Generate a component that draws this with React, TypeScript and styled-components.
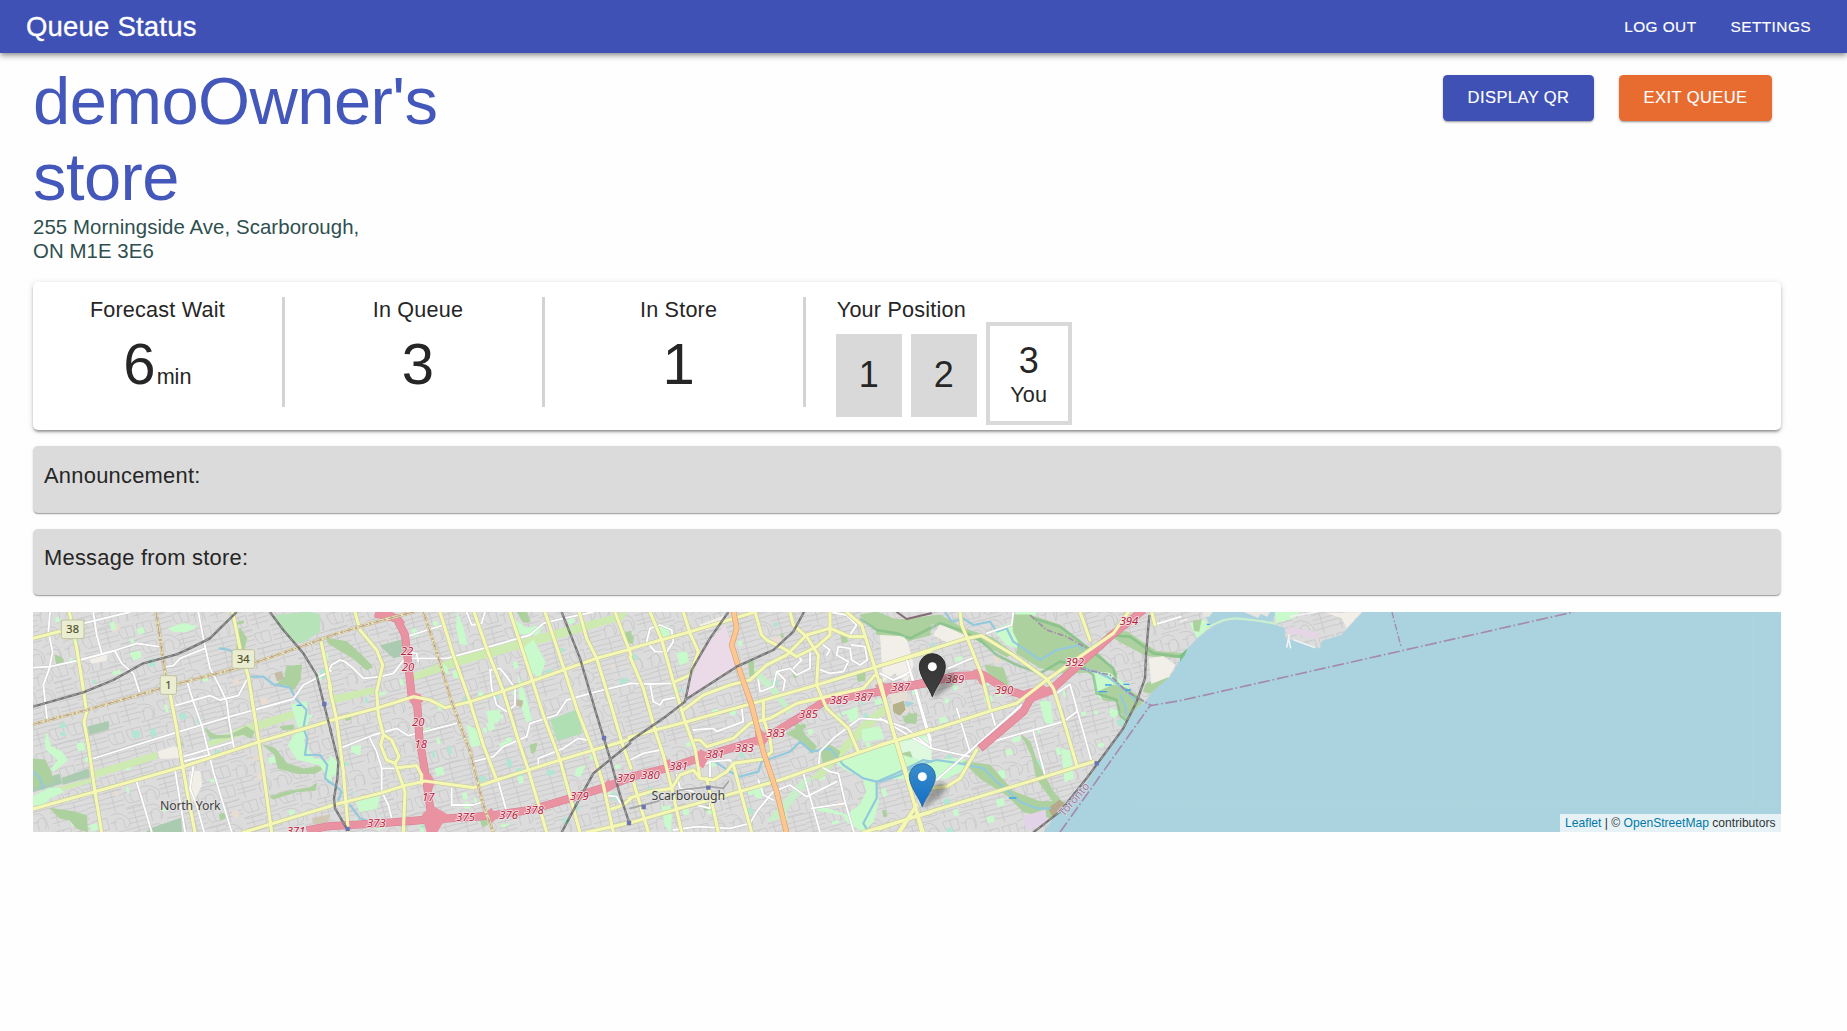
import React from "react";
import styled, { createGlobalStyle } from "styled-components";

const GlobalStyle = createGlobalStyle`
  *, *::before, *::after { box-sizing: border-box; }
  body {
    margin: 0;
    background: #fefefe;
    color: #262626;
    font-family: "Liberation Sans", Arial, Helvetica, sans-serif;
    overflow: hidden;
  }
`;

const AppBar = styled.header`
  position: relative;
  display: flex;
  align-items: center;
  justify-content: space-between;
  height: 53px;
  padding: 0 36px 0 26px;
  background: #3f51b5;
  color: #fff;
  box-shadow: 0 2px 4px -1px rgba(0, 0, 0, 0.3), 0 4px 5px rgba(0, 0, 0, 0.16), 0 1px 10px rgba(0, 0, 0, 0.12);
`;

const AppTitle = styled.div`
  font-size: 27.5px;
  letter-spacing: 0.0075em;
  -webkit-text-stroke: 0.3px currentColor;
`;

const Nav = styled.nav`
  display: flex;
  gap: 34px;
`;

const NavLink = styled.a`
  font-size: 15.4px;
  letter-spacing: 0.02857em;
  line-height: 17px;
  text-transform: uppercase;
  -webkit-text-stroke: 0.15px currentColor;
`;

const Page = styled.main`
  padding: 9.7px 66px 0 33px;
`;

const TopRow = styled.section`
  display: flex;
  justify-content: space-between;
  align-items: flex-start;
`;

const StoreInfo = styled.div`
  width: 437px;
`;

const StoreName = styled.h1`
  margin: 0;
  color: #4457bb;
  font-size: 66.9px;
  font-weight: 400;
  line-height: 76px;
  letter-spacing: -0.00833em;
`;

const Address = styled.p`
  margin: 0;
  color: #2f4f4f;
  font-size: 20.4px;
  line-height: 24.8px;
  letter-spacing: 0.0037em;
`;

const Actions = styled.div`
  display: flex;
  gap: 25px;
  padding: 12px 9px 0 0;
`;

const Button = styled.button<{ $color: string; $width: number }>`
  width: ${(p) => p.$width}px;
  height: 46px;
  padding: 0;
  border: 0;
  border-radius: 4.5px;
  background: ${(p) => p.$color};
  color: #fff;
  font: 16.5px "Liberation Sans", Arial, sans-serif;
  letter-spacing: 0.026em;
  text-transform: uppercase;
  white-space: nowrap;
  -webkit-text-stroke: 0.15px currentColor;
  box-shadow: 0 2px 2px -1px rgba(0, 0, 0, 0.28), 0 1px 3px rgba(0, 0, 0, 0.2);
`;

const StatsCard = styled.section`
  display: flex;
  height: 148px;
  margin-top: 17.7px;
  padding-top: 15px;
  border-radius: 5px;
  background: #fff;
  box-shadow: 0 3px 3px -2px rgba(0, 0, 0, 0.3), 0 2px 3px rgba(0, 0, 0, 0.2), 0 1px 7px rgba(0, 0, 0, 0.12);
`;

const Stat = styled.div`
  width: 251.8px;
  height: 110px;
  margin-right: 8.8px;
  border-right: 3.5px solid #d3d3d3;
  text-align: center;
`;

const Label = styled.div`
  font-size: 21.6px;
  line-height: 26px;
  letter-spacing: 0.00938em;
`;

const BigNumber = styled.div`
  display: flex;
  justify-content: center;
  align-items: baseline;
  margin-top: 6px;
  font-size: 58px;
  line-height: 70px;
`;

const Unit = styled.span`
  margin-left: 1px;
  font-size: 21.6px;
`;

const Position = styled.div`
  margin-left: 21px;
`;

const PositionLabel = styled(Label)`
  padding-left: 1px;
`;

const Places = styled.div`
  display: flex;
  align-items: flex-start;
  gap: 9px;
  margin-top: -0.6px;
`;

const Place = styled.div`
  display: flex;
  align-items: center;
  justify-content: center;
  width: 66px;
  height: 83px;
  margin-top: 11.6px;
  background: #d9d9d9;
  font-size: 36px;
`;

const OwnPlace = styled.div`
  width: 86px;
  height: 102.6px;
  padding-top: 15px;
  border: 4.4px solid #d9d9d9;
  background: #fff;
  text-align: center;
  font-size: 36px;
  line-height: 40px;
`;

const OwnCaption = styled(Label)`
  margin-top: 1px;
`;

const Notice = styled.section`
  height: 66.3px;
  margin-top: 16.4px;
  padding: 16.4px 11px;
  border-radius: 5px;
  background: #dbdbdb;
  box-shadow: 0 2px 1px -1px rgba(0, 0, 0, 0.2), 0 1px 1px rgba(0, 0, 0, 0.14), 0 1px 3px rgba(0, 0, 0, 0.12);
`;

const NoticeText = styled(Label)`
  font-size: 21.9px;
  letter-spacing: 0.0115em;
`;

const MapFrame = styled.section`
  position: relative;
  height: 219.5px;
  margin-top: 16.8px;
  overflow: hidden;
  background: #ddd;
`;

const MapCanvas = styled.svg`
  display: block;
  width: 100%;
  height: 100%;
`;

const Attribution = styled.div`
  position: absolute;
  right: 0;
  bottom: 0;
  height: 17.5px;
  padding: 1px 5.5px 0;
  background: rgba(255, 255, 255, 0.7);
  color: #333;
  font-size: 12.1px;
  line-height: 17.5px;
  white-space: nowrap;
`;

const MapLink = styled.a`
  color: #0078a8;
`;

type Shape = [string, string];

interface Sheet {
  x: number;
  areas: Shape[];
  rivers: string[];
  white: string[];
  yellow: string[];
  county: string[];
  motorway: string[];
  rail: string[];
}

const MINT = "#c8facc";
const WOOD = "#add19e";
const STRIP = "#cdebb0";
const PARK = "#aacbaf";
const SAND = "#f2efe9";

/* Map geometry, four adjoining sheets from west to east. */
const sheets: Sheet[] = [
  {
    x: 0,
    areas: [
      [PARK, "175,365 235,350 235,372 178,388"],
      [PARK, "96,520 175,492 178,515 100,537"],
      [PARK, "9,532 88,508 95,535 9,560"],
      [PARK, "350,680 365,670 452,640 455,680"],
      [STRIP, "195,498 380,442 382,460 197,517"],
      [STRIP, "40,560 190,520 190,530 42,570"],
      [STRIP, "535,412 640,365 790,318 792,338 650,385 540,424"],
      [WOOD, "700,420 735,430 770,475 820,492 862,485 880,490 855,505 800,505 745,490 735,450"],
      [WOOD, "60,610 130,620 170,632 172,680 140,670 120,645 90,640"],
      [WOOD, "770,185 815,180 810,225 790,255 770,240 740,238 765,215"],
      [WOOD, "525,370 545,385 560,392 600,390 650,365 672,380 665,400 640,388 590,398 540,400"],
      [WOOD, "720,575 770,560 840,548 860,535 855,556 800,560 730,582"],
      ["#b7e3b9", "745,30 840,22 870,30 868,80 820,110 790,112 760,80 730,40"],
      [WOOD, "750,365 790,360 790,372 760,375"],
      [WOOD, "800,330 830,350 825,365 803,368"],
      [WOOD, "630,70 650,100 640,140 620,130"],
      [MINT, "50,385 62,425 95,440 112,465 70,500 65,490 85,465 50,435 45,410"],
      [WOOD, "9,462 45,465 62,500 70,530 9,545"],
      [MINT, "785,300 830,290 835,350 820,410 850,460 900,470 905,540 870,480 800,462 775,420 805,370"],
      [MINT, "300,145 330,138 335,155 310,165"],
      [MINT, "9,575 60,550 90,550 100,560 60,580 40,600 9,600"],
      [MINT, "415,70 460,55 500,65 470,80 430,80"],
      [WOOD, "75,150 98,160 102,180 80,178"],
      [SAND, "385,440 430,425 455,430 455,458 390,460"],
      [SAND, "180,165 230,150 230,165 185,175"],
      [SAND, "480,500 510,500 515,540 490,590 478,560"],
      ["#c4bda4", "735,205 755,200 760,220 742,228"],
      ["#d0c8b5", "848,640 900,630 890,655 850,655"],
    ],
    rivers: [
      "660,215 700,215 730,238 780,248 800,285 830,315 820,370 832,400 825,450 870,450 892,480 885,520 905,535",
      "570,130 600,135 625,155",
      "9,500 30,520 40,550",
    ],
    white: [
      "60,21 55,80 68,140 58,190 40,240 52,350",
      "160,55 300,21",
      "190,21 200,90 215,145",
      "9,188 60,185 150,165 250,138 320,115 388,125",
      "255,138 275,175 310,205 328,260",
      "505,21 520,100 540,190 572,250 590,290 598,350 612,430",
      "410,185 430,182 450,160 525,130",
      "435,302 540,272 570,285 625,272 650,225",
      "470,225 490,290 515,360 530,420 550,500 605,680",
      "185,462 440,382 600,335 790,282 820,240 903,197",
      "460,455 605,412",
      "465,468 540,450",
      "320,530 365,680",
      "435,495 465,680",
      "490,485 480,550 500,600 522,680",
      "9,215 -10,220",
    ],
    yellow: [
      "118,21 140,130 158,240 170,320 162,350 175,420 195,560 215,682",
      "9,100 95,78",
      "415,240 440,370 458,485 475,580 495,682",
      "608,21 630,130 655,215 675,340 700,500 725,682",
      "9,612 195,560 458,485 683,412 903,347",
      "640,682 730,655 903,603",
      "872,103 903,255",
    ],
    county: ["9,358 170,315 410,245 640,185 903,93", "378,21 390,100 405,200 415,240"],
    motorway: ["830,676 905,662"],
    rail: [
      "9,305 160,262 250,225 340,175 440,148 480,130 540,100 620,21",
      "720,21 760,75 820,145 860,210 880,290 903,380",
    ],
  },
  {
    x: 900,
    areas: [
      [PARK, "152,122 215,105 217,152 190,158 170,140"],
      ["#b0dfb4", "662,345 740,315 755,385 682,405"],
      [STRIP, "0,275 130,248 132,264 0,297"],
      [STRIP, "250,208 370,160 700,70 890,21 880,42 700,95 380,182 255,224"],
      [WOOD, "-10,100 50,110 95,150 128,185 110,195 70,160 -5,115"],
      [MINT, "580,130 610,105 645,170 630,218 590,190"],
      [MINT, "382,25 400,70 410,120 390,115 380,70"],
      [MINT, "0,450 20,470 20,510 0,510"],
      [MINT, "330,170 350,185 355,205 330,195"],
      [MINT, "410,360 440,375 450,420 425,425"],
      [MINT, "565,215 585,270 605,345 590,350 570,290"],
      [MINT, "470,320 510,315 505,350 478,355"],
      [MINT, "65,425 92,422 90,450 65,440"],
      [MINT, "80,590 150,570 140,610 90,620"],
      [MINT, "740,490 765,483 750,515 735,510"],
      [WOOD, "562,21 590,21 600,50 580,52"],
      [WOOD, "885,85 903,78 903,115 890,110"],
      [WOOD, "600,420 620,415 615,440 605,445"],
      [MINT, "540,25 560,50 590,70 640,60 620,90 560,85"],
      ["#c4bda4", "560,285 578,288 575,305 560,300"],
    ],
    rivers: ["-5,530 20,545 35,560 25,585", "60,600 90,640 120,650"],
    white: [
      "-3,197 5,180 30,165 45,170 70,190 100,220 150,215 190,205 225,160 260,160 350,160 460,130 600,90 640,55 700,40 790,21",
      "230,95 340,60",
      "35,428 130,390 200,370 235,392 380,355",
      "430,470 490,455 520,425 590,395 600,355 680,330 710,285 800,260 903,235",
      "505,530 530,620",
      "480,195 510,190 530,215 555,250 555,300 530,320 500,300 485,250 480,195",
      "625,480 625,460 700,430 745,400 770,405",
      "410,21 425,60 455,55 465,21",
      "120,400 140,440 155,490 155,560 175,600 185,640",
      "155,490 205,490",
      "365,550 365,600 430,600 460,590",
      "225,140 260,145 265,170",
      "820,570 860,575 875,600",
    ],
    yellow: [
      "75,21 90,75 140,135 158,180 140,260 145,330 160,390 152,420 170,465 195,475 207,455 185,405 162,390",
      "195,475 215,530 225,560 220,682",
      "205,488 260,482 275,510 275,535",
      "-3,347 140,310 250,275 300,285 345,308 420,290 520,258 615,225 800,160 903,132",
      "-3,603 150,565 220,543 285,528 430,548 500,525 690,465 870,412 903,402",
      "330,21 370,150 420,290 460,420 500,525",
      "432,21 470,130 520,258 560,390 595,495 650,682",
      "540,21 600,205 640,330 690,465 750,682",
      "645,21 700,185 740,310 790,440 820,540 850,682",
      "748,21 770,100 800,160 840,290 875,410 903,490",
      "855,21 903,150",
      "-3,240 20,345 40,500 55,682",
      "770,682 903,652",
      "845,612 880,600 903,580",
    ],
    county: ["-3,93 130,53 250,21", "280,21 320,140 365,290 420,440 460,600 490,682"],
    motorway: [
      "135,25 200,40 225,90 235,180 245,275 262,300 268,400 285,500 295,570 305,640 305,682",
      "-5,664 150,655 280,645 480,632 600,615 720,580 830,545 905,516",
      "160,21 205,45 215,60",
    ],
    rail: [
      "695,21 750,160 800,330 840,460 870,570 900,660",
      "903,413 790,505 760,560 695,682",
      "0,370 25,470 22,520 12,580 15,610 50,670",
    ],
  },
  {
    x: 1800,
    areas: [
      ["#ebdbe8", "285,60 318,170 310,190 165,285 180,215 240,110"],
      [STRIP, "545,520 620,440 700,350 775,290 770,320 700,390 610,480 575,520"],
      ["#c8f0c8", "520,520 545,520 450,640 410,650"],
      [WOOD, "690,30 740,21 800,45 903,40 900,90 830,108 800,95 740,75"],
      [MINT, "620,475 690,445 790,412 903,388 903,530 780,500 740,530 700,520 640,490"],
      ["#dff8e0", "800,415 903,395 903,465 830,470"],
      [MINT, "690,480 740,540 745,590 730,650 700,680 650,650 640,630 560,615 575,605 650,630 690,600 710,560"],
      [WOOD, "480,345 510,360 525,390 560,425 545,445 515,410 470,385 500,370"],
      [WOOD, "570,430 600,420 630,440 620,470 580,475"],
      [WOOD, "355,165 370,170 372,220 360,215"],
      [WOOD, "800,450 840,440 850,470 810,480"],
      [WOOD, "835,325 860,330 855,355 830,350"],
      [WOOD, "680,205 705,200 705,225 685,230"],
      [WOOD, "-10,80 10,95 8,115 -10,110"],
      ["#c8f0c8", "375,190 440,250 485,320 475,325 425,262 378,215"],
      [MINT, "650,320 680,305 685,345 660,350"],
      [MINT, "695,375 750,365 760,400 700,410"],
      [MINT, "80,65 115,62 118,95 90,105"],
      [MINT, "95,600 125,630 120,680 105,660"],
      [MINT, "370,550 400,545 395,580 375,575"],
      [MINT, "140,145 170,140 175,170 150,180"],
      [SAND, "770,85 830,105 850,180 830,230 800,210 780,130"],
      [SAND, "210,60 290,30 280,50 230,75"],
      ["#e6dfd3", "780,260 830,260 835,320 790,320"],
      ["#b5b18b", "790,300 820,290 825,315 808,330 792,320"],
      ["#aad3df", "825,290 850,295 830,305"],
      ["#c4bfa8", "855,325 860,325 860,330"],
    ],
    rivers: [
      "255,470 300,500 330,515 385,500 395,470 480,440 510,410 545,440 600,430 640,480 700,520 740,530 800,505 880,465 903,470",
      "740,530 740,580 700,655 715,680",
    ],
    white: [
      "60,70 90,60 125,75 130,110 110,140 75,140 50,110 60,70",
      "-3,235 60,237 130,235",
      "60,235 70,290 90,300 100,285 135,278",
      "190,375 250,370 260,380 340,350 335,310",
      "565,490 570,440 610,400 690,340 760,345 830,370 903,430",
      "565,480 600,500 625,505 645,590 672,682",
      "520,505 570,682",
      "545,610 645,595",
      "130,675 200,665 300,670 360,655 380,620 430,560 480,540 530,575 620,530",
      "385,225 390,260 430,245 440,200 480,190 500,210 540,190 540,140",
      "560,190 600,205 640,200 655,170 620,150 625,125 660,130 665,165 690,180 712,165 705,125 665,120",
      "580,120 600,135 590,150",
      "600,21 650,30 680,60 660,90",
      "490,190 515,165 500,150",
      "440,200 465,225 460,255",
      "830,160 903,405",
      "750,205 790,225 840,200",
      "0,465 40,445 90,435",
      "200,490 240,470 300,465 312,480",
      "240,470 240,515",
      "385,525 400,570 430,585",
      "140,510 150,550 190,560",
      "240,560 240,610 200,600",
    ],
    yellow: [
      "-3,132 175,82 375,21",
      "-3,397 75,375 165,352 385,290 560,240 735,187 903,138",
      "-3,580 60,560 125,550 150,510 190,495 210,520 250,525 290,500 310,475 400,462 425,440 420,400 400,340 400,290",
      "-3,655 150,610 450,525 680,445 790,408 903,373",
      "60,21 95,105 130,230 165,350 195,430 210,520",
      "160,21 180,85 205,140 180,210 135,230",
      "0,155 40,250 75,375 100,450 125,550 155,682",
      "160,315 220,270 300,240 360,225 410,180 470,150 530,90 600,70 660,95 705,95",
      "195,405 210,405 230,425 310,400 360,355 420,340 500,295 590,275 700,250 735,210",
      "375,21 395,90 410,105 460,130 500,155 560,125 600,90 600,21",
      "480,21 490,60 530,95 565,150 560,240 590,310 655,370 685,440",
      "650,21 695,60 735,190 765,290 795,400 830,520 880,682",
      "230,520 265,682",
      "310,480 365,682",
      "10,530 55,682",
      "700,682 903,622",
      "805,682 860,600",
    ],
    county: [],
    motorway: ["-5,517 130,485 220,455 385,405 430,385 520,330 590,285 760,258 903,232"],
    rail: [
      "295,21 240,100 185,195 165,290 100,340 -3,410",
      "165,285 320,185 430,135 490,80 522,21",
    ],
  },
  {
    x: 2550,
    areas: [
      [SAND, "0,60 70,70 80,150 90,200 50,200 10,230"],
      [SAND, "180,60 250,80 260,95 200,110 160,90"],
      ["#b5b18b", "40,300 70,290 75,315 58,330 42,320"],
      ["#aad3df", "75,290 100,295 80,305"],
      [WOOD, "-10,40 60,45 180,30 250,70 340,100 400,145 380,155 290,105 180,55 130,60 70,92 -10,88"],
      [MINT, "340,75 400,50 410,21 470,21 430,80 420,130 380,120"],
      [WOOD, "400,30 450,30 540,60 600,110 660,150 712,205 700,235 640,200 560,205 480,188 410,145 415,110 400,80"],
      [MINT, "640,200 690,205 740,240 770,290 755,325 735,345 720,290 660,280 645,250"],
      [WOOD, "655,260 700,240 740,250 790,285 770,320 740,345 715,310 720,290 670,285"],
      [MINT, "0,430 130,470 240,460 280,480 200,520 0,520"],
      [WOOD, "250,470 330,480 400,560 480,590 555,590 520,640 430,620 380,570 300,520"],
      [WOOD, "680,85 740,80 830,140 903,145 903,158 800,152 720,110"],
      [WOOD, "315,180 370,190 385,240 340,235"],
      [WOOD, "425,390 450,410 470,470 520,560 545,590 520,590 470,520 455,450"],
      [WOOD, "70,335 110,325 108,355 75,352"],
      [WOOD, "800,235 860,215 870,225 815,265 790,260"],
      [SAND, "808,160 850,155 885,180 865,215 815,235"],
      [MINT, "480,290 510,290 520,360 495,350"],
      [MINT, "545,430 570,440 580,520 555,530"],
      [MINT, "690,310 715,320 705,340 690,330"],
      ["#e3d3e8", "430,635 495,615 500,655 440,675"],
      ["#b6a98c", "505,610 540,585 555,600 520,635"],
    ],
    rivers: [
      "195,21 215,50 250,40 280,60 330,50 350,80 380,70 400,110 430,130 480,165 530,135 600,120 620,160",
      "600,190 650,200 690,220 740,260 770,290",
      "0,530 60,510 110,480 170,465 240,475 310,490 350,530 420,590 470,610 510,610",
      "720,270 735,300 740,330",
    ],
    white: [
      "80,165 155,430",
      "0,340 100,400 155,430 270,455",
      "170,525 290,420 425,300",
      "230,310 270,440",
      "305,210 345,360",
      "300,420 450,378 550,350 590,320",
      "530,265 570,238 635,470",
      "460,380 495,510",
      "400,21 395,60 320,85",
      "205,190 280,158",
      "820,60 903,35",
      "0,205 40,225 80,210",
    ],
    yellow: [
      "-3,183 260,100 305,92 400,150 500,222 520,250 540,310 590,480",
      "240,21 245,60 262,100 305,210 330,310",
      "-3,421 140,380 330,318 410,295 500,225 700,85 745,21",
      "-3,672 110,632 480,520 640,470",
      "600,21 630,105",
      "110,600 60,682",
      "0,225 40,380 75,490 125,682",
      "110,555 200,545 240,520 290,435",
      "815,21 825,60",
    ],
    county: [],
    motorway: ["-3,250 100,240 230,213 310,210 380,255 430,270 510,258 590,185 690,95 790,15", "455,275 430,320 300,430"],
    rail: ["808,30 798,150 795,220 770,290 730,370 620,520 540,620 460,682"],
  },
];

/* Interchanges, where ramps widen the motorway. */
const junctions = [
  "1130,275 1148,260 1172,268 1180,290 1160,300 1145,285",
  "1175,520 1200,505 1215,530 1205,560 1188,545",
  "1175,630 1205,600 1260,632 1235,660 1222,682 1190,682",
  "1362,625 1385,608 1400,640 1382,658",
  "1715,545 1735,522 1760,545 1720,570",
  "1900,470 1920,462 1930,500 1910,495",
  "2000,445 2012,432 2040,450 2020,490 2000,480",
  "2175,380 2190,370 2218,400 2200,425 2178,420",
  "2535,240 2560,232 2580,262 2560,292",
  "2828,195 2850,190 2885,215 2860,245 2848,235",
  "2985,255 3040,240 3075,265 3010,290",
];

const exits: [number, number, string][] = [
  [1131, 138, "22"], [1134, 187, "20"], [1165, 351, "20"], [1172, 417, "18"], [1195, 576, "17"],
  [798, 677, "371"], [1039, 654, "373"], [1307, 636, "375"], [1436, 630, "376"], [1513, 616, "378"],
  [1648, 573, "379"], [1788, 520, "379"], [1861, 509, "380"], [1946, 484, "381"], [2055, 446, "381"],
  [2143, 428, "383"], [2237, 383, "383"], [2335, 327, "385"], [2427, 284, "385"], [2501, 277, "387"],
  [2612, 246, "387"], [2775, 222, "389"], [2922, 255, "390"], [3134, 171, "392"], [3297, 48, "394"],
];

const stations: [number, number][] = [[883, 297], [953, 672], [1722, 399], [1797, 654], [1841, 606], [2035, 548], [3200, 475]];

/* Repeatable pseudo-random numbers for the residential street texture. */
function makeRandom(seed: number) {
  let s = seed;
  return () => {
    s = (s * 1664525 + 1013904223) % 4294967296;
    return s / 4294967296;
  };
}

function buildStreets() {
  const rnd = makeRandom(41);
  const parts: string[] = [];
  for (let col = -4; col < 70; col++) {
    for (let row = -1; row < 32; row++) {
      const x = col * 56;
      const y = row * 60;
      const kind = rnd();
      const j = () => Math.round(rnd() * 12 - 6);
      if (kind < 0.42) {
        for (let k = 0; k < 4; k++) parts.push(`M${x} ${y + k * 15 + j() / 3}h56`);
        parts.push(`M${x + 20 + j()} ${y}v60`);
      } else if (kind < 0.75) {
        parts.push(`M${x + j()} ${y + 8}q${30 + j()} ${-8 + j()} ${44 + j()} 14t-6 34`);
        parts.push(`M${x + 12} ${y + 56}v-22q2 -14 16 -12t12 18v16`);
        parts.push(`M${x} ${y + 30}h18`);
      } else {
        parts.push(`M${x + 4} ${y + 12}h44v34h-30q-14 -2 -14 -34`);
        parts.push(`M${x + 24} ${y + 12}q${j()} 20 4 34M${x} ${y + 58}q28 ${j()} 56 0`);
      }
    }
  }
  return parts.join("");
}

function buildParks() {
  const rnd = makeRandom(977);
  return Array.from({ length: 210 }, () => {
    const x = rnd() * 3300;
    const y = 25 + rnd() * 650;
    const w = 8 + rnd() * 18;
    const h = 8 + rnd() * 18;
    const t = rnd();
    const fill = t < 0.55 ? MINT : t < 0.86 ? "#b0e6d2" : t < 0.93 ? WOOD : "#e8ddd0";
    return { x, y, w, h, fill };
  });
}

const streets = buildStreets();
const parks = buildParks();
const OSM_FONT = '"Noto Sans", "Open Sans", sans-serif';

const Lines = ({ of, color, width, dash, cap = "round" }: { of: string[]; color: string; width: number; dash?: string; cap?: "round" | "butt" }) => (
  <g fill="none" stroke={color} strokeWidth={width} strokeDasharray={dash} strokeLinejoin="round" strokeLinecap={cap}>
    {of.map((points) => (
      <polyline key={points} points={points} />
    ))}
  </g>
);

const eachSheet = (draw: (sheet: Sheet) => React.ReactNode) =>
  sheets.map((sheet) => (
    <g key={sheet.x} transform={`translate(${sheet.x} 0)`}>
      {draw(sheet)}
    </g>
  ));

const Shield = ({ x, y, text }: { x: number; y: number; text: string }) => {
  const width = text.length > 1 ? 68 : 49;
  return (
    <g>
      <rect x={x - width / 2} y={y - 28} width={width} height={56} rx={6} fill="#ebedd2" stroke="#bfc29c" strokeWidth={3} />
      <text x={x} y={y + 12} textAnchor="middle" fontFamily={OSM_FONT} fontSize={33} fill="#4f5227" stroke="#4f5227" strokeWidth={0.6}>
        {text}
      </text>
    </g>
  );
};

const Pin = ({ x, y, fill, edge }: { x: number; y: number; fill: string; edge: string }) => (
  <g transform={`translate(${x} ${y})`}>
    <path d="M0 0 L24 -52 Q46 -80 66 -68 Q82 -54 56 -32 L12 0Z" fill="#000" opacity={0.3} filter="url(#soft)" />
    <path d="M0 0 C-8 -26 -39 -60 -39 -91 A39 38 0 0 1 39 -91 C39 -60 8 -26 0 0Z" fill={fill} stroke={edge} strokeWidth={3} />
    <circle cx={0} cy={-90} r={13.5} fill="#fff" />
  </g>
);

const StoreMap = () => (
  <MapCanvas viewBox="9 21 5244 658.5" preserveAspectRatio="none">
    <defs>
      <filter id="soft" x="-40%" y="-40%" width="180%" height="180%">
        <feGaussianBlur stdDeviation="6" />
      </filter>
      <linearGradient id="bluePin" x1="0" y1="0" x2="0" y2="1">
        <stop offset="0" stopColor="#3c8dc9" />
        <stop offset="1" stopColor="#126fc6" />
      </linearGradient>
      <linearGradient id="darkPin" x1="0" y1="0" x2="0" y2="1">
        <stop offset="0" stopColor="#333" />
        <stop offset="1" stopColor="#404040" />
      </linearGradient>
    </defs>

    <rect width="5300" height="700" fill="#dcdcdc" />
    <path d={streets} transform="translate(-60 -40) rotate(-15)" fill="none" stroke="#c7c7c7" strokeWidth={2.3} />
    {parks.map((p, i) => (
      <rect key={i} x={p.x} y={p.y} width={p.w} height={p.h} rx={3} fill={p.fill} transform={`rotate(-16 ${p.x} ${p.y})`} />
    ))}
    {eachSheet((s) => s.areas.map(([fill, points]) => <polygon key={points} points={points} fill={fill} stroke={fill} strokeWidth={3} strokeLinejoin="round" />))}
    <g fill="none" stroke="#7fbd85" strokeWidth={8} strokeLinejoin="round" opacity={0.7}>
      <polyline points="2490,40 2540,75 2600,85 2640,100 2690,75 2730,55 2790,75 2850,105 2900,150 2960,180 3030,205 3090,170 3160,185 3190,210 3200,265 3260,285 3270,330 3290,348" />
      <polyline points="3010,40 3090,65 3150,110 3250,190 3260,235 3330,285" />
      <polyline points="3230,90 3300,95 3370,145 3450,155 3470,140" />
    </g>
    {eachSheet((s) => <Lines of={s.rivers} color="#93c9dc" width={6.5} />)}

    <polygon
      fill="#aad3df"
      points="3450,165 3420,215 3365,262 3350,285 3320,310 3290,345 3270,385 3240,430 3200,485 3170,530 3140,570 3100,610 3070,640 3040,682 5300,682 5300,10 3998,21 3934,90 3876,108 3870,130 3765,98 3765,70 3730,57 3680,48 3602,42 3555,60 3502,100 3473,130"
    />
    <polygon points="3480,55 3525,45 3540,65 3500,100" fill={MINT} />
    <polygon points="3735,21 3810,21 3790,40 3738,55" fill={MINT} />
    <polygon points="3890,25 3995,21 3950,70 3935,40" fill={SAND} />
    <polygon points="3775,65 3862,82 3866,103 3768,82" fill="#e6d5e5" />
    <polygon points="3450,150 3472,130 3465,150 3450,170" fill="#7dc086" />
    <polygon points="3488,48 3515,42 3508,80 3492,78" fill={WOOD} />
    <polygon points="3520,21 3735,21 3730,50 3680,44 3602,38 3540,60" fill="#aad3df" />
    <polyline points="3530,68 3580,45 3620,40 3690,48 3740,57" fill="none" stroke="#c8f0cc" strokeWidth={6} />
    <path d="M3520 21h28l-10 14h-20zM3640 21h80l-8 14-20-8-8 12-22-10z" fill="#e8e6e0" />
    <path d="M3450 50L3472 42M3780 35L3860 21M3782 130L3776 100M3770 128l8 -40M3790 104l66 24" fill="none" stroke="#f2f2f2" strokeWidth={5} />
    <path d="M3479 180V679M4320 21V679M5167 21V679M3300 598H5253" stroke="#b4d5dc" strokeWidth={2} opacity={0.7} />

    {eachSheet((s) => <Lines of={s.white} color="#c8c8c8" width={8} />)}
    {eachSheet((s) => <Lines of={s.white} color="#ffffff" width={5.5} />)}
    {eachSheet((s) => <Lines of={s.yellow} color="#c7cb97" width={13} />)}
    {eachSheet((s) => <Lines of={s.motorway} color="#d97f92" width={24} cap="butt" />)}
    <g fill="#e892a2">
      {junctions.map((points) => (
        <polygon key={points} points={points} />
      ))}
    </g>
    {eachSheet((s) => <Lines of={s.motorway} color="#e892a2" width={21} cap="butt" />)}
    {eachSheet((s) => <Lines of={s.yellow} color="#f5f7b5" width={9.5} />)}
    {eachSheet((s) => (
      <>
        <Lines of={s.county} color="#c9bb94" width={10} />
        <Lines of={s.county} color="#eeecb4" width={7} dash="16 6" cap="butt" />
        <Lines of={s.county} color="#bb9c98" width={3} dash="30 5 6 5" cap="butt" />
      </>
    ))}
    <g transform="translate(1800 0)">
      <Lines of={["310,15 320,70 305,120 330,200 365,300 400,440 440,560 470,685"]} color="#dca06e" width={17} />
      <Lines of={["310,15 320,70 305,120 330,200 365,300 400,440 440,560 470,685"]} color="#fcc791" width={13} />
      <Lines of={["0,610 80,590 150,555 240,545 280,550 295,530"]} color="#a5a5a5" width={5} />
      <Lines of={["800,21 830,42 903,25"]} color="#846a77" width={6} />
    </g>
    {eachSheet((s) => (
      <>
        <Lines of={s.rail} color="#757575" width={7} cap="butt" />
        <Lines of={s.rail} color="#b5b5b5" width={2} dash="14 10" cap="butt" />
      </>
    ))}

    <g fill="none" stroke="#a58aaa" strokeWidth={5}>
      <polyline points="3000,30 3050,75 3110,95 3170,130" strokeDasharray="18 6 4 6" />
      <polyline points="3150,190 3240,210 3290,260 3365,302" strokeDasharray="18 6 4 6" />
      <polyline points="3090,682 3360,302 3455,286 4631,21" strokeDasharray="36 8 5 8" />
      <polyline points="4086,21 4113,125" strokeDasharray="20 6 5 6" strokeWidth={4} />
    </g>
    <path stroke="#3fa4e8" strokeWidth={4} d="M3205 260h26M3225 240h20M3280 238h18M3285 255h18M2937 579h22M800 301h14M3530 58h10" />

    {stations.map(([x, y]) => (
      <rect key={`${x}-${y}`} x={x - 6.5} y={y - 6.5} width={13} height={13} fill="#6b74b5" />
    ))}

    <g fontFamily={OSM_FONT} fontSize={34} fontStyle="italic" textAnchor="middle" fill="#b0233f" stroke="#f6e4e6" strokeWidth={5} paintOrder="stroke" strokeLinejoin="round">
      {exits.map(([x, y, label]) => (
        <text key={`${x}-${label}`} x={x} y={y + 12}>
          {label}
        </text>
      ))}
    </g>
    <g fontFamily={OSM_FONT} fontSize={37} fill="#404040" stroke="#e8e8e8" strokeOpacity={0.8} strokeWidth={5} paintOrder="stroke" textAnchor="middle">
      <text x={481} y={614} textLength={182}>North York</text>
      <text x={1975} y={586} textLength={221}>Scarborough</text>
    </g>
    <text transform="translate(3101 636) rotate(-49)" fontFamily={OSM_FONT} fontSize={33} fill="#9a7ca0" stroke="#dcdde4" strokeWidth={4} paintOrder="stroke">
      Toronto
    </text>
    <Shield x={128} y={73} text="38" />
    <Shield x={640} y={162} text="34" />
    <Shield x={415} y={240} text="1" />

    <Pin x={2707} y={275} fill="url(#darkPin)" edge="#2b2b2b" />
    <Pin x={2677} y={605} fill="url(#bluePin)" edge="#2c6fa6" />
  </MapCanvas>
);

export default function App() {
  return (
    <>
      <GlobalStyle />
      <AppBar>
        <AppTitle>Queue Status</AppTitle>
        <Nav>
          <NavLink>Log out</NavLink>
          <NavLink>Settings</NavLink>
        </Nav>
      </AppBar>
      <Page>
        <TopRow>
          <StoreInfo>
            <StoreName>demoOwner's store</StoreName>
            <Address>
              255 Morningside Ave, Scarborough,
              <br />
              ON M1E 3E6
            </Address>
          </StoreInfo>
          <Actions>
            <Button $color="#3f51b5" $width={151}>Display QR</Button>
            <Button $color="#e86c30" $width={153}>Exit Queue</Button>
          </Actions>
        </TopRow>
        <StatsCard>
          <Stat>
            <Label>Forecast Wait</Label>
            <BigNumber>
              6<Unit>min</Unit>
            </BigNumber>
          </Stat>
          <Stat>
            <Label>In Queue</Label>
            <BigNumber>3</BigNumber>
          </Stat>
          <Stat>
            <Label>In Store</Label>
            <BigNumber>1</BigNumber>
          </Stat>
          <Position>
            <PositionLabel>Your Position</PositionLabel>
            <Places>
              <Place>1</Place>
              <Place>2</Place>
              <OwnPlace>
                3<OwnCaption>You</OwnCaption>
              </OwnPlace>
            </Places>
          </Position>
        </StatsCard>
        <Notice>
          <NoticeText>Announcement:</NoticeText>
        </Notice>
        <Notice>
          <NoticeText>Message from store:</NoticeText>
        </Notice>
        <MapFrame>
          <StoreMap />
          <Attribution>
            <MapLink>Leaflet</MapLink> | © <MapLink>OpenStreetMap</MapLink> contributors
          </Attribution>
        </MapFrame>
      </Page>
    </>
  );
}
